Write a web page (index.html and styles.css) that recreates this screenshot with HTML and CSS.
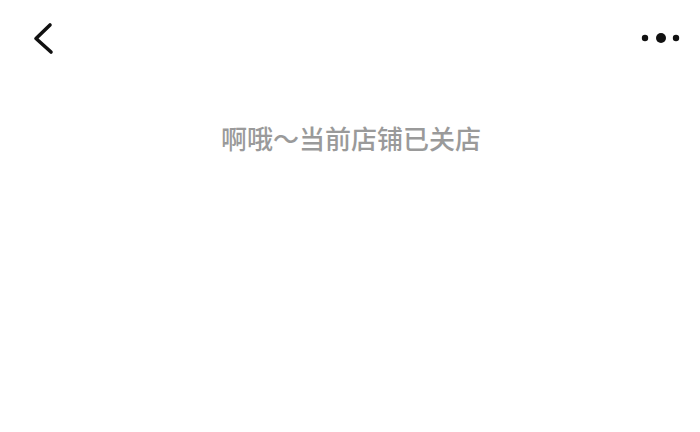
FILE: index.html
```html
<!DOCTYPE html>
<html lang="zh">
<head>
<meta charset="utf-8">
<link rel="stylesheet" href="styles.css">
</head>
<body>
<div class="page">
  <header class="nav">
    <span class="back">
      <svg width="24" height="34" viewBox="0 0 24 34"><path d="M17 4 L3 17.5 L18 31" fill="none" stroke="#111" stroke-width="3.6" stroke-linecap="round" stroke-linejoin="round"/></svg>
    </span>
    <span class="more">
      <svg width="40" height="14" viewBox="0 0 40 14"><circle cx="4" cy="7" r="3.2" fill="#111"/><circle cx="20" cy="7" r="5" fill="#111"/><circle cx="35" cy="7" r="3.2" fill="#111"/></svg>
    </span>
  </header>
  <main class="content">
    <p class="msg">啊哦～当前店铺已关店</p>
  </main>
</div>
</body>
</html>
```
FILE: styles.css
```css
html, body { margin: 0; padding: 0; background: #fff; }
.page { width: 700px; height: 432px; font-family: "Noto Sans CJK SC", "Noto Sans", sans-serif; }
.nav { display: flex; justify-content: space-between; align-items: center; height: 76px; padding: 0 19px 0 33px; box-sizing: border-box; }
.back { display: flex; }
.more { display: flex; }
.content { display: flex; justify-content: center; }
.msg { margin: 42px 0 0 2px; font-size: 26px; line-height: 40px; font-weight: 500; color: #9a9a9a; }
```
